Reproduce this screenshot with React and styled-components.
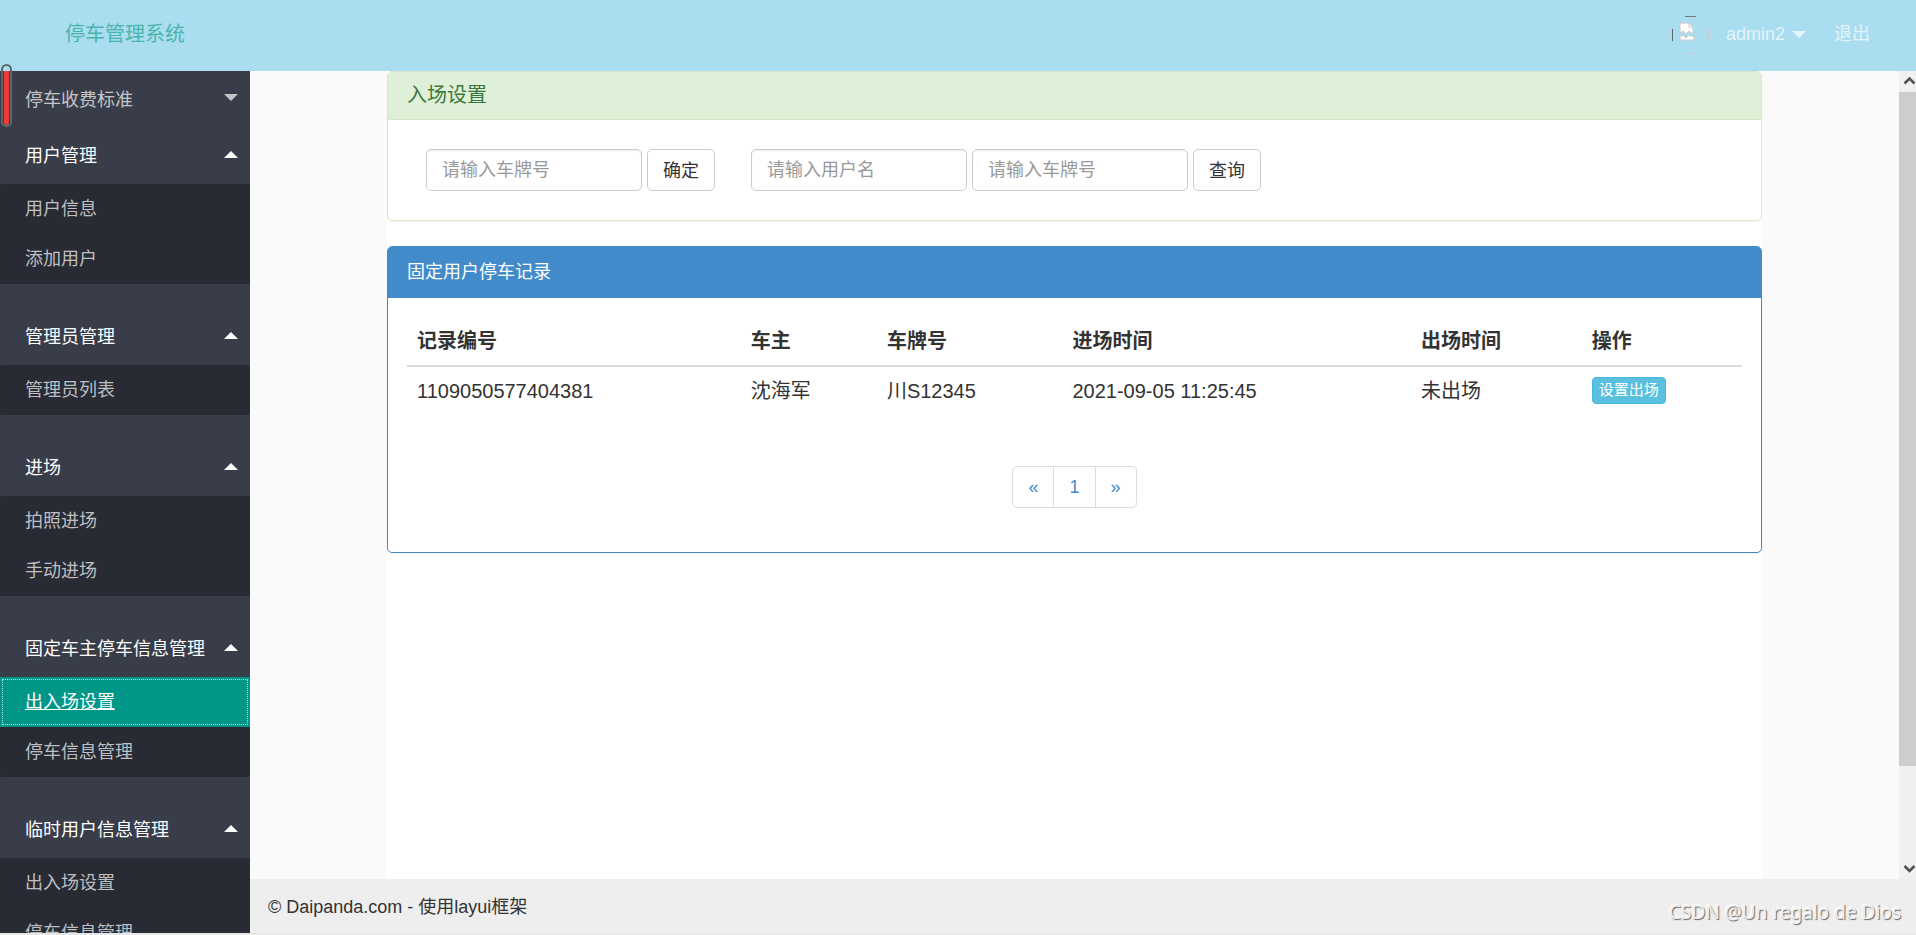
import { useState } from 'react';
import styled, { createGlobalStyle } from 'styled-components';

const GlobalStyle = createGlobalStyle`
    *, *::before, *::after{
        box-sizing: border-box;
    }
    body{
        background: #e6e6e6;
        color: #333;
        font-family: "Liberation Sans", "Noto Sans CJK SC", sans-serif;
        font-size: 18px;
        line-height: 25px;
        margin: 0;
    }
    input, button{
        font-family: inherit;
    }
    a{
        text-decoration: none;
    }
    ul{
        list-style: none;
        margin: 0;
        padding: 0;
    }
`

const Page = styled.div`
    display: grid;
    grid-template-columns: 250px 1fr;
    grid-template-rows: 71px minmax(0, 1fr) 54px;
    height: 100vh;
    overflow: hidden;
    padding-bottom: 2px;
    position: relative;
`

const Header = styled.header`
    align-items: center;
    background: #aaddf0;
    display: flex;
    grid-column: 1 / -1;
    justify-content: space-between;
    padding: 0 46px 2px 65px;
`

const Logo = styled.h1`
    color: #4ab5ab;
    font-size: 20px;
    font-weight: 400;
    margin: 0;
`

const UserNav = styled.nav`
    align-items: center;
    display: flex;
    .avatar{
        height: 38px;
        margin-right: 16px;
        width: 38px;
    }
`

const UserLink = styled.a`
    align-items: center;
    color: #e3f4fa;
    display: flex;
    gap: 7px;
    margin-left: ${({ $spaced }) => $spaced ? '28px' : '0'};
`

const Caret = styled.i`
    border: 7px solid transparent;
    border-bottom-width: 0;
    border-top-color: currentColor;
    height: 0;
    transform: ${({ $up }) => $up ? 'rotate(180deg)' : 'none'};
    width: 0;
`

const Side = styled.nav`
    background: #393d49;
    grid-row: 2 / 4;
    overflow: hidden;
`

const NavGroup = styled.li`
    padding-bottom: ${({ $open }) => $open ? '24px' : '0'};
`

const NavTitle = styled.button`
    align-items: center;
    background: none;
    border: 0;
    color: ${({ $open }) => $open ? '#fff' : '#c4c5c8'};
    cursor: pointer;
    display: flex;
    font-size: 18px;
    height: ${({ $open }) => $open ? '57px' : '56px'};
    justify-content: space-between;
    padding: 0 12px 3px 25px;
    width: 100%;
`

const SubMenu = styled.ul`
    background: #282b33;
    border-radius: 2px;
`

const SubLink = styled.a`
    background: ${({ $active }) => $active ? '#009688' : 'none'};
    color: ${({ $active }) => $active ? '#fff' : '#bebfc2'};
    display: block;
    line-height: 50px;
    outline: ${({ $active }) => $active ? '1px dotted #b2dfdb' : 'none'};
    outline-offset: -3px;
    padding: 0 25px;
    text-decoration: ${({ $active }) => $active ? 'underline' : 'none'};
`

const HoverBar = styled.span`
    background: #f03a3a content-box;
    border: 2px solid #5c676b;
    border-radius: 6px;
    height: 63px;
    left: 1px;
    padding: 5px 1px 0;
    position: absolute;
    top: 64px;
    width: 11px;
`

const Body = styled.div`
    background: #fafafa;
    display: flex;
    min-height: 0;
`

const Main = styled.main`
    background: #fff;
    margin: 0 auto;
    max-width: 1375px;
    width: 84%;
`

const ScrollTrack = styled.div`
    align-items: center;
    background: #f0f0f0;
    display: flex;
    flex-direction: column;
    width: 17px;
    svg{
        flex: none;
        height: 21px;
        width: 17px;
    }
    .rail{
        flex: 1;
        width: 100%;
    }
    .thumb{
        background: #cdcdcd;
        height: 88%;
    }
`

const Panel = styled.section`
    border: 1px solid ${({ $primary }) => $primary ? '#428bca' : '#d6e9c6'};
    border-radius: 5px;
    box-shadow: 0 1px 1px rgba(0, 0, 0, .05);
    margin-bottom: 25px;
    overflow: hidden;
`

const PanelHeading = styled.h2`
    background: ${({ $primary }) => $primary ? '#428bca' : '#dff0d8'};
    border-bottom: 1px solid ${({ $primary }) => $primary ? '#428bca' : '#d6e9c6'};
    color: ${({ $primary }) => $primary ? '#fff' : '#3c763d'};
    font-size: ${({ $primary }) => $primary ? '18px' : '20px'};
    font-weight: 400;
    line-height: ${({ $primary }) => $primary ? '24px' : '25px'};
    margin: 0;
    padding: ${({ $primary }) => $primary ? '13px' : '11px'} 19px;
`

const Forms = styled.div`
    display: flex;
    gap: 36px;
    padding: 29px 38px;
`

const InlineForm = styled.form`
    display: flex;
    gap: 5px;
`

const TextInput = styled.input`
    border: 1px solid #ccc;
    border-radius: 5px;
    box-shadow: inset 0 1px 1px rgba(0, 0, 0, .075);
    color: #555;
    font-size: 18px;
    height: 42px;
    padding: 0 15px;
    width: 216px;
    &::placeholder{
        color: #999;
    }
`

const Button = styled.button`
    background: #fff;
    border: 1px solid #ccc;
    border-radius: 5px;
    color: #333;
    cursor: pointer;
    font-size: 18px;
    height: 42px;
    padding: 0 15px 3px;
`

const SmallButton = styled.button`
    background: #5bc0de;
    border: 1px solid #46b8da;
    border-radius: 4px;
    color: #fff;
    cursor: pointer;
    display: block;
    font-size: 15px;
    height: 27px;
    line-height: 20px;
    padding: 0 6px 1px;
`

const PanelBody = styled.div`
    padding: 19px;
`

const Table = styled.table`
    border-collapse: collapse;
    font-size: 20px;
    line-height: 28px;
    table-layout: fixed;
    width: 100%;
    th{
        border-bottom: 2px solid #ddd;
        padding: 10px;
        text-align: left;
    }
    td{
        padding: 10px;
        vertical-align: top;
    }
`

const Pagination = styled.ul`
    display: flex;
    justify-content: center;
    margin: 51px 0 25px;
    a{
        border: 1px solid #ddd;
        color: #428bca;
        display: block;
        line-height: 40px;
        padding: 0 15px;
    }
    li + li a{
        border-left: 0;
    }
    li:first-child a{
        border-radius: 5px 0 0 5px;
    }
    li:last-child a{
        border-radius: 0 5px 5px 0;
    }
`

const Footer = styled.footer`
    align-items: center;
    background: #eee;
    display: flex;
    justify-content: space-between;
    padding: 2px 15px 0 18px;
`

const Watermark = styled.span`
    color: #eee;
    font-family: "Noto Sans", sans-serif;
    font-size: 19px;
    padding-top: 11px;
    text-shadow: 1px 1px 1px #666, -1px -1px 1px #fff;
`

const menu = [
    { title: '停车收费标准', items: [] },
    { title: '用户管理', items: ['用户信息', '添加用户'] },
    { title: '管理员管理', items: ['管理员列表'] },
    { title: '进场', items: ['拍照进场', '手动进场'] },
    { title: '固定车主停车信息管理', items: ['出入场设置', '停车信息管理'] },
    { title: '临时用户信息管理', items: ['出入场设置', '停车信息管理'] },
];

const columns = [
    { name: '记录编号', width: '25%' },
    { name: '车主', width: '10.2%' },
    { name: '车牌号', width: '13.9%' },
    { name: '进场时间', width: '26.1%' },
    { name: '出场时间', width: '12.8%' },
    { name: '操作', width: '12%' },
];

const records = [
    { id: '1109050577404381', owner: '沈海军', plate: '川S12345', enter: '2021-09-05 11:25:45', leave: '未出场' },
];

function Avatar(){
    return(
        <svg className='avatar' viewBox='0 0 38 38' role='img' aria-label='admin2'>
            <path d='M.5 13v12' stroke='#666' />
            <path d='M13 .5h11' stroke='#777' />
            <path d='M36.5 13v12M13 37.5h11' stroke='#c9c9c9' />
            <path d='M8 7h9l4 4v6l-2 0-2-2-3 3-3-3-3 2z' fill='#fff' stroke='#c8c8c8' />
            <path d='M17 7v4h4' fill='none' stroke='#c8c8c8' />
            <path d='M8 20l2 0 1-1 3 3 3-3 2 1 3 0v4H8z' fill='#fff' stroke='#c8c8c8' />
        </svg>
    )
}

function NavSection({ title, items, activeItem }){
    const [open, setOpen] = useState(items.length > 0);

    return(
        <NavGroup $open={open}>
            <NavTitle type='button' $open={open} aria-expanded={open} onClick={() => setOpen(!open)}>
                {title}
                <Caret $up={open} />
            </NavTitle>
            {open &&
                <SubMenu>
                    {items.map((item) => (
                        <li key={item}>
                            <SubLink href='#' $active={item === activeItem}>{item}</SubLink>
                        </li>
                    ))}
                </SubMenu>
            }
        </NavGroup>
    )
}

export default function App(){
    return(
        <>
            <GlobalStyle />
            <Page>
                <Header>
                    <Logo>停车管理系统</Logo>
                    <UserNav>
                        <Avatar />
                        <UserLink href='#'>admin2 <Caret /></UserLink>
                        <UserLink href='#' $spaced>退出</UserLink>
                    </UserNav>
                </Header>
                <Side>
                    <ul>
                        {menu.map((group, i) => (
                            <NavSection
                                key={group.title}
                                title={group.title}
                                items={group.items}
                                activeItem={i === 4 ? '出入场设置' : ''}
                            />
                        ))}
                    </ul>
                </Side>
                <Body>
                    <Main>
                        <Panel>
                            <PanelHeading>入场设置</PanelHeading>
                            <Forms>
                                <InlineForm>
                                    <TextInput aria-label='车牌号' placeholder='请输入车牌号' />
                                    <Button type='button'>确定</Button>
                                </InlineForm>
                                <InlineForm>
                                    <TextInput aria-label='用户名' placeholder='请输入用户名' />
                                    <TextInput aria-label='车牌号' placeholder='请输入车牌号' />
                                    <Button type='button'>查询</Button>
                                </InlineForm>
                            </Forms>
                        </Panel>
                        <Panel $primary>
                            <PanelHeading $primary>固定用户停车记录</PanelHeading>
                            <PanelBody>
                                <Table>
                                    <colgroup>
                                        {columns.map((col) => <col key={col.name} width={col.width} />)}
                                    </colgroup>
                                    <thead>
                                        <tr>
                                            {columns.map((col) => <th key={col.name}>{col.name}</th>)}
                                        </tr>
                                    </thead>
                                    <tbody>
                                        {records.map((record) => (
                                            <tr key={record.id}>
                                                <td>{record.id}</td>
                                                <td>{record.owner}</td>
                                                <td>{record.plate}</td>
                                                <td>{record.enter}</td>
                                                <td>{record.leave}</td>
                                                <td><SmallButton type='button'>设置出场</SmallButton></td>
                                            </tr>
                                        ))}
                                    </tbody>
                                </Table>
                                <Pagination>
                                    <li><a href='#'>«</a></li>
                                    <li><a href='#'>1</a></li>
                                    <li><a href='#'>»</a></li>
                                </Pagination>
                            </PanelBody>
                        </Panel>
                    </Main>
                    <ScrollTrack>
                        <svg viewBox='0 0 17 21'>
                            <path d='M5.5 12.5L10.5 7.5L15.5 12.5' fill='none' stroke='#505050' strokeWidth='2.5' />
                        </svg>
                        <div className='rail'>
                            <div className='thumb' />
                        </div>
                        <svg viewBox='0 0 17 21'>
                            <path d='M5.5 8L10.5 13L15.5 8' fill='none' stroke='#505050' strokeWidth='2.5' />
                        </svg>
                    </ScrollTrack>
                </Body>
                <Footer>
                    <span>© Daipanda.com - 使用layui框架</span>
                    <Watermark>CSDN @Un regalo de Dios</Watermark>
                </Footer>
                <HoverBar />
            </Page>
        </>
    )
}
